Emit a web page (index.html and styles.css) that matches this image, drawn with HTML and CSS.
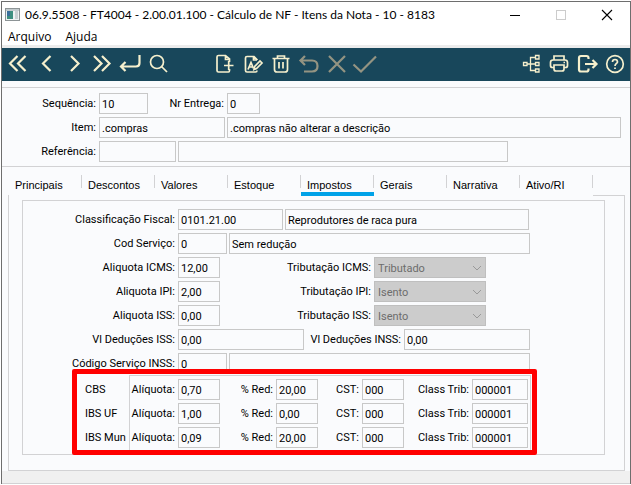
FILE: index.html
```html
<!DOCTYPE html>
<html lang="pt-BR">
<head>
    <meta charset="UTF-8">
    <meta name="viewport" content="width=device-width, initial-scale=1.0">
    <title>FT4004 - Cálculo de NF - Itens da Nota</title>
    <link rel="stylesheet" href="styles.css">
</head>
<body>
    <div class="window">
        <header class="titlebar">
            <svg class="app-icon" width="15" height="13" viewBox="0 0 15 13">
                <rect x=".5" y=".5" width="14" height="12" fill="#eef2f2" stroke="#8d9496"/>
                <rect x="1" y="1" width="13" height="2" fill="#c3cbce"/>
                <rect x="2" y="3" width="6" height="8" fill="#3d8f80"/>
                <rect x="2" y="3" width="3" height="5" fill="#3a6f9c"/>
                <rect x="10" y="3" width="3" height="8" fill="#c9d0d3"/>
            </svg>
            <span class="title">06.9.5508 - FT4004 - 2.00.01.100 - Cálculo de NF - Itens da Nota - 10 - 8183</span>
            <div class="window-buttons">
                <button class="window-button" aria-label="Minimizar">
                    <svg width="12" height="12" viewBox="0 0 12 12"><path d="M1 6.5H11" stroke="#000"/></svg>
                </button>
                <button class="window-button" aria-label="Maximizar" disabled>
                    <svg width="12" height="12" viewBox="0 0 12 12"><rect x="1.5" y="1.5" width="9" height="9" fill="none" stroke="#ccc"/></svg>
                </button>
                <button class="window-button" aria-label="Fechar">
                    <svg width="12" height="12" viewBox="0 0 12 12"><path d="M1 1L11 11M11 1L1 11" stroke="#000" stroke-width="1.1"/></svg>
                </button>
            </div>
        </header>

        <nav class="menu">
            <button class="menu-item">Arquivo</button>
            <button class="menu-item">Ajuda</button>
        </nav>

        <div class="toolbar">
            <div class="tools">
                <button class="tool" aria-label="Primeiro">
                    <svg viewBox="0 0 22 22"><path d="M10.5 3L3 10.5L10.5 18M18.5 3L11 10.5L18.5 18"/></svg>
                </button>
                <button class="tool" aria-label="Anterior">
                    <svg viewBox="0 0 22 22"><path d="M15.5 3L8 10.5L15.5 18"/></svg>
                </button>
                <button class="tool" aria-label="Próximo">
                    <svg viewBox="0 0 22 22"><path d="M8 3L15.5 10.5L8 18"/></svg>
                </button>
                <button class="tool" aria-label="Último">
                    <svg viewBox="0 0 22 22"><path d="M3 3L10.5 10.5L3 18M11 3L18.5 10.5L11 18"/></svg>
                </button>
                <button class="tool" aria-label="Vai para">
                    <svg viewBox="0 0 22 22"><path d="M20.5 2V10Q20.5 13.5 17 13.5H2M6.5 9L2 13.5L6.5 18"/></svg>
                </button>
                <button class="tool" aria-label="Pesquisar">
                    <svg class="thin" viewBox="0 0 22 22"><circle cx="10" cy="9" r="6.5"/><path d="M14.5 13.5L20 19"/></svg>
                </button>
            </div>
            <div class="tools">
                <button class="tool" aria-label="Incluir">
                    <svg class="thin" viewBox="0 0 22 22"><path d="M15.5 9V6L11.5 2.5H4.5Q3 2.5 3 4V17.5Q3 19 4.5 19H14.5Q15.5 19 15.5 17.5V16M11.5 2.5V6.5H15.5M10 12.5H19.5M14.7 8V17"/></svg>
                </button>
                <button class="tool" aria-label="Alterar">
                    <svg class="thin" viewBox="0 0 22 22"><path d="M15 7V6.5L12 3.5H5Q3.5 3.5 3.5 5V17.5Q3.5 19 5 19H13.5Q15 19 15 17.5M11.5 3.5V7H15M6 16.5L9 9.5L11.5 15.5M7 14H10.5"/><path d="M12 16.5L12.7 13.5L18 8L20 10L14.5 15.5Z"/></svg>
                </button>
                <button class="tool" aria-label="Eliminar">
                    <svg class="thin" viewBox="0 0 22 22"><path d="M2.5 5.5H19.5M7.5 5V3H14.5V5M4.5 6V16.5Q4.5 19 7 19H15Q17.5 19 17.5 16.5V6M9 9V15.5M13 9V15.5"/></svg>
                </button>
                <button class="tool" aria-label="Desfazer" disabled>
                    <svg viewBox="0 0 22 22"><path d="M7 3L2.5 7.5L7 12M2.5 7.5H14Q19.5 7.5 19.5 13T14 18.5H6"/></svg>
                </button>
                <button class="tool" aria-label="Cancelar" disabled>
                    <svg viewBox="0 0 22 22"><path d="M3 3L19 19M19 3L3 19"/></svg>
                </button>
                <button class="tool" aria-label="Confirmar" disabled>
                    <svg viewBox="0 0 22 22"><path d="M-.5 11.5L7 18.5L22 3.5"/></svg>
                </button>
            </div>
            <div class="tools tools-right">
                <button class="tool" aria-label="Programas relacionados">
                    <svg class="fine" viewBox="0 0 22 22"><path d="M3.5 9.5H7V12.5H3.5ZM15.5 2.5H19V6H15.5ZM15.5 9.5H19V12.5H15.5ZM15.5 16H19V19H15.5ZM7 11H15.5M15.5 4.5H10.5V17.5H15.5"/></svg>
                </button>
                <button class="tool" aria-label="Imprimir">
                    <svg class="thin" viewBox="0 0 22 22"><path d="M6 7V3H16V7M6 14.5H4.5Q2.5 14.5 2.5 12.5V9.5Q2.5 7 5 7H17Q19.5 7 19.5 9.5V12.5Q19.5 14.5 17.5 14.5H16M6 12H16V16Q16 18 14 18H8Q6 18 6 16ZM15.5 9.5H17"/></svg>
                </button>
                <button class="tool" aria-label="Sair">
                    <svg viewBox="0 0 22 22"><path d="M12.5 6V5Q12.5 3 10.5 3H5Q3 3 3 5V16.5Q3 18.5 5 18.5H10.5Q12.5 18.5 12.5 16.5V15.5M9 11H20.5M16.5 7L20.5 11L16.5 15"/></svg>
                </button>
                <button class="tool" aria-label="Ajuda">
                    <svg class="thin" viewBox="0 0 22 22"><circle cx="11" cy="11" r="8.3"/><path d="M8.5 9Q8.5 6.5 11 6.5T13.5 9C13.5 10.5 11 10.5 11 13M11 14.5V16"/></svg>
                </button>
            </div>
        </div>

        <section class="item-header">
            <div class="row">
                <label class="label-header" for="sequencia">Sequência:</label>
                <input class="w-code" id="sequencia" value="10" readonly>
                <label class="label-entrega" for="entrega">Nr Entrega:</label>
                <input class="w-mini" id="entrega" value="0" readonly>
            </div>
            <div class="row">
                <label class="label-header" for="item">Item:</label>
                <input class="w-long" id="item" value=".compras" readonly>
                <input class="w-fill" aria-label="Descrição do item" value=".compras não alterar a descrição" readonly>
            </div>
            <div class="row">
                <label class="label-header" for="referencia">Referência:</label>
                <input class="w-ref" id="referencia" readonly>
                <input class="w-ref-desc" aria-label="Descrição da referência" readonly>
            </div>
        </section>

        <div class="tabs" role="tablist">
            <button class="tab" role="tab">Principais</button>
            <button class="tab" role="tab">Descontos</button>
            <button class="tab" role="tab">Valores</button>
            <button class="tab" role="tab">Estoque</button>
            <button class="tab active" role="tab" aria-selected="true">Impostos</button>
            <button class="tab" role="tab">Gerais</button>
            <button class="tab" role="tab">Narrativa</button>
            <button class="tab" role="tab">Ativo/RI</button>
        </div>

        <main class="tab-page">
            <div class="panel">
                <div class="row">
                    <label class="label-main" for="classificacao">Classificação Fiscal:</label>
                    <input class="w-fiscal" id="classificacao" value="0101.21.00" readonly>
                    <input class="w-desc" aria-label="Descrição da classificação" value="Reprodutores de raca pura" readonly>
                </div>
                <div class="row">
                    <label class="label-main" for="servico">Cod Serviço:</label>
                    <input class="w-code" id="servico" value="0" readonly>
                    <input class="w-desc-long" aria-label="Descrição do serviço" value="Sem redução" readonly>
                </div>
                <div class="row">
                    <label class="label-main" for="aliq-icms">Aliquota ICMS:</label>
                    <input class="w-rate" id="aliq-icms" value="12,00" readonly>
                    <label class="label-trib" for="trib-icms">Tributação ICMS:</label>
                    <select id="trib-icms" disabled><option>Tributado</option></select>
                </div>
                <div class="row">
                    <label class="label-main" for="aliq-ipi">Aliquota IPI:</label>
                    <input class="w-rate" id="aliq-ipi" value="2,00" readonly>
                    <label class="label-trib" for="trib-ipi">Tributação IPI:</label>
                    <select id="trib-ipi" disabled><option>Isento</option></select>
                </div>
                <div class="row">
                    <label class="label-main" for="aliq-iss">Aliquota ISS:</label>
                    <input class="w-rate" id="aliq-iss" value="0,00" readonly>
                    <label class="label-trib" for="trib-iss">Tributação ISS:</label>
                    <select id="trib-iss" disabled><option>Isento</option></select>
                </div>
                <div class="row">
                    <label class="label-main" for="ded-iss">Vl Deduções ISS:</label>
                    <input class="w-long" id="ded-iss" value="0,00" readonly>
                    <label class="label-inss" for="ded-inss">Vl Deduções INSS:</label>
                    <input class="w-long" id="ded-inss" value="0,00" readonly>
                </div>
                <div class="row">
                    <label class="label-main" for="servico-inss">Código Serviço INSS:</label>
                    <input class="w-code" id="servico-inss" value="0" readonly>
                    <input class="w-desc-long" aria-label="Descrição do serviço INSS" readonly>
                </div>

                <div class="taxes">
                    <div class="tax-names">
                        <span>CBS</span>
                        <span>IBS UF</span>
                        <span>IBS Mun</span>
                    </div>
                    <div class="tax-values">
                        <div class="row">
                            <label class="label-aliq" for="cbs-aliq">Alíquota:</label>
                            <input class="w-rate" id="cbs-aliq" value="0,70" readonly>
                            <label class="label-red" for="cbs-red">% Red:</label>
                            <input class="w-rate" id="cbs-red" value="20,00" readonly>
                            <label class="label-cst" for="cbs-cst">CST:</label>
                            <input class="w-rate" id="cbs-cst" value="000" readonly>
                            <label class="label-class" for="cbs-class">Class Trib:</label>
                            <input class="w-class" id="cbs-class" value="000001" readonly>
                        </div>
                        <div class="row">
                            <label class="label-aliq" for="uf-aliq">Alíquota:</label>
                            <input class="w-rate" id="uf-aliq" value="1,00" readonly>
                            <label class="label-red" for="uf-red">% Red:</label>
                            <input class="w-rate" id="uf-red" value="0,00" readonly>
                            <label class="label-cst" for="uf-cst">CST:</label>
                            <input class="w-rate" id="uf-cst" value="000" readonly>
                            <label class="label-class" for="uf-class">Class Trib:</label>
                            <input class="w-class" id="uf-class" value="000001" readonly>
                        </div>
                        <div class="row">
                            <label class="label-aliq" for="mun-aliq">Alíquota:</label>
                            <input class="w-rate" id="mun-aliq" value="0,09" readonly>
                            <label class="label-red" for="mun-red">% Red:</label>
                            <input class="w-rate" id="mun-red" value="20,00" readonly>
                            <label class="label-cst" for="mun-cst">CST:</label>
                            <input class="w-rate" id="mun-cst" value="000" readonly>
                            <label class="label-class" for="mun-class">Class Trib:</label>
                            <input class="w-class" id="mun-class" value="000001" readonly>
                        </div>
                    </div>
                    <div class="highlight"></div>
                </div>
            </div>
        </main>

        <footer class="statusbar"></footer>
    </div>
</body>
</html>
```
FILE: styles.css
```css
* {
    box-sizing: border-box;
}
body {
    margin: 0;
    background: white;
    font-family: Roboto, sans-serif;
    font-size: 11px;
    color: #000;
}
button, input, select {
    font: inherit;
    color: inherit;
    margin: 0;
}
button {
    padding: 0;
    border: none;
    background: none;
}

/* janela */
.window {
    margin: 1px 0 0 1px;
    border: 1px solid #6e6e6e;
    border-bottom: none;
    background: #fafbfd;
}
.titlebar {
    display: flex;
    align-items: center;
    height: 25px;
    padding-left: 3px;
    background: white;
    font-family: Lato, sans-serif;
    font-size: 12px;
}
.title {
    flex: 1;
    margin-left: 5px;
    white-space: nowrap;
}
.window-buttons {
    display: flex;
}
.window-button {
    display: flex;
    align-items: center;
    justify-content: center;
    width: 46px;
    height: 24px;
}
.menu {
    display: flex;
    gap: 14px;
    height: 21px;
    padding-left: 6px;
    background: white;
    border-bottom: 3px solid #ececec;
    font-family: "Open Sans", sans-serif;
    font-size: 12px;
}
.menu-item {
    line-height: 20px;
}

/* barra de ferramentas */
.toolbar {
    display: flex;
    align-items: center;
    gap: 39px;
    height: 33px;
    padding: 0 1px 2px 2px;
    background: #18475b;
    color: #f6f0cd;
}
.tools {
    display: flex;
}
.tools-right {
    margin-left: auto;
}
.tool {
    display: flex;
    justify-content: center;
    width: 28px;
}
.tool:disabled {
    color: #949482;
}
.tool svg {
    width: 22px;
    height: 22px;
    flex: none;
    overflow: visible;
    fill: none;
    stroke: currentColor;
    stroke-width: 2.2;
}
.tool svg.thin {
    stroke-width: 1.7;
}
.tool svg.fine {
    stroke-width: 1.3;
}

/* campos */
.row {
    display: flex;
    gap: 2px;
    height: 21px;
    margin-bottom: 3px;
}
.row label {
    display: flex;
    flex: none;
    justify-content: flex-end;
    padding-right: 1px;
    line-height: 22px;
    white-space: nowrap;
}
input, select {
    flex: none;
    height: 21px;
    min-width: 0;
    padding: 1px 2px 0;
    border: 1px solid #c8c8c8;
    border-radius: 0;
    background: #fafbfd;
    outline: none;
}
select:disabled {
    width: 112px;
    padding: 1px 3px 0;
    appearance: none;
    border-color: #bfbfbf;
    background: #ccc url("data:image/svg+xml,%3Csvg xmlns='http://www.w3.org/2000/svg' width='10' height='6'%3E%3Cpath d='M1 1L5 5L9 1' fill='none' stroke='%23999'/%3E%3C/svg%3E") no-repeat right 3px center;
    color: #6d6d6d;
    opacity: 1;
}
.w-mini { width: 33px; }
.w-rate { width: 42px; }
.w-code { width: 49px; }
.w-class { width: 56px; }
.w-ref { width: 77px; }
.w-fiscal { width: 105px; }
.w-long { width: 126px; }
.w-desc { width: 244px; }
.w-desc-long { width: 301px; }
.w-ref-desc { width: 330px; }
.w-fill { flex: 1; }

.label-header { width: 95px; }
.label-entrega { width: 75px; }
.label-main { width: 153px; }
.label-trib { width: 150px; }
.label-inss { width: 96px; }
.label-aliq { width: 46px; }
.label-red { width: 52px; }
.label-cst { width: 40px; }
.label-class { width: 64px; }

.item-header {
    margin-top: 6px;
    padding: 5px 9px 1px 0;
    border-top: 1px solid #d2d2d4;
    border-bottom: 1px solid #d2d2d4;
}

/* abas */
.tabs {
    display: flex;
    position: relative;
    width: max-content;
    margin: 8px 0 -1px 7px;
    background: #fafbfd;
    font-family: "Liberation Sans", Arial, sans-serif;
}
.tab {
    width: 73px;
    height: 21px;
    padding-left: 6px;
    line-height: 21px;
    text-align: left;
    background: linear-gradient(#d2d2d4, #d2d2d4) no-repeat right top / 1px 13px;
}
.tab.active {
    border-bottom: 4px solid #00a2e8;
}
.tab-page {
    margin: 0 5px 0 6px;
    padding: 4px 19px 15px 13px;
    border: 1px solid #d2d2d4;
}
.panel {
    padding: 8px 0 3px;
    border: 1px solid #d2d2d4;
}

/* CBS / IBS */
.taxes {
    display: flex;
    position: relative;
    margin-top: -2px;
}
.tax-names {
    display: flex;
    flex-direction: column;
    gap: 2px;
    width: 106px;
    padding: 4px 0 0 62px;
    line-height: 22px;
    white-space: nowrap;
}
.tax-values {
    width: 402px;
    padding-top: 3px;
    border: 1px solid #d2d2d4;
    border-bottom: none;
}
.highlight {
    position: absolute;
    top: -6px;
    bottom: -4px;
    left: 49px;
    width: 465px;
    border: 5px solid #f00;
    border-radius: 2px;
    pointer-events: none;
}

.statusbar {
    height: 13px;
    background: #f0f0f0;
    border-bottom: 1px solid #d2d2d4;
}
```
